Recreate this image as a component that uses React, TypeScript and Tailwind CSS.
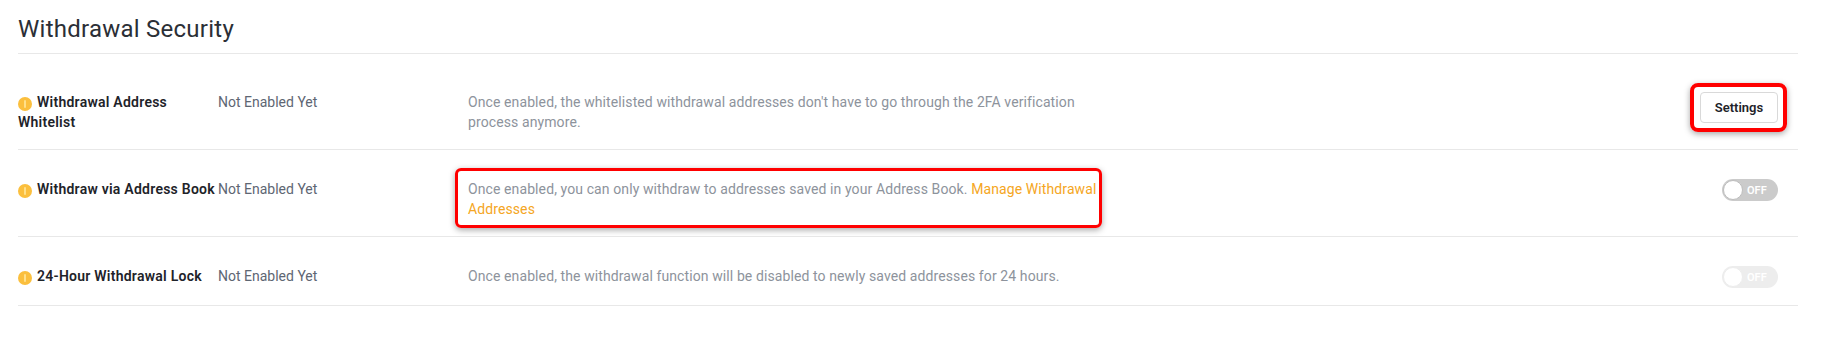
import type { ReactNode } from "react";

type Row = {
  label: string;
  status: string;
  description: ReactNode;
  action: ReactNode;
  highlight?: boolean;
};

function WarnDot() {
  return (
    <span className="mr-[5px] inline-flex h-[14px] w-[14px] items-center justify-center rounded-full bg-[#fbbf3d] align-[-1px]">
      <span className="block h-[8px] w-[2px] rounded-full bg-[#ffe08a]" />
    </span>
  );
}

function Toggle({ disabled }: { disabled?: boolean }) {
  return (
    <div
      className={`flex h-[22px] w-[56px] items-center rounded-full ${
        disabled ? "bg-[#ededed]" : "bg-[#cbcbcb]"
      }`}
    >
      <span
        className={`ml-[1px] h-[20px] w-[20px] rounded-full border bg-white ${
          disabled ? "border-[#ededed]" : "border-[#bdbdbd]"
        }`}
      />
      <span className="ml-[4px] text-[11px] font-semibold leading-none text-white">
        OFF
      </span>
    </div>
  );
}

function SettingsButton() {
  return (
    <div className="relative">
      <button className="h-[31px] w-[78px] rounded-[4px] border border-[#d9d9d9] bg-white text-[13px] font-semibold text-[#1e2329]">
        Settings
      </button>
      <span className="pointer-events-none absolute -top-[9px] -right-[9px] -bottom-[9px] -left-[10px] rounded-[8px] border-[4px] border-[#ff0000] shadow-[0_2px_6px_rgba(0,0,0,0.35)]" />
    </div>
  );
}

const rows: Row[] = [
  {
    label: "Withdrawal Address Whitelist",
    status: "Not Enabled Yet",
    description:
      "Once enabled, the whitelisted withdrawal addresses don't have to go through the 2FA verification process anymore.",
    action: <SettingsButton />,
  },
  {
    label: "Withdraw via Address Book",
    status: "Not Enabled Yet",
    description: (
      <>
        Once enabled, you can only withdraw to addresses saved in your Address
        Book.{" "}
        <a className="text-[#f5a623]">Manage Withdrawal Addresses</a>
      </>
    ),
    action: <Toggle />,
    highlight: true,
  },
  {
    label: "24-Hour Withdrawal Lock",
    status: "Not Enabled Yet",
    description:
      "Once enabled, the withdrawal function will be disabled to newly saved addresses for 24 hours.",
    action: <Toggle disabled />,
  },
];

export default function App() {
  return (
    <div className="min-h-[344px] bg-white font-['Roboto',sans-serif]">
      <div className="ml-[18px] w-[1780px]">
        <h1 className="border-b border-[#e8e8e8] pt-[13px] pb-[8px] text-[24px] leading-[32px] font-normal tracking-[0.25px] text-[#2b2f36]">
          Withdrawal Security
        </h1>

        <div className="mt-[9px]">
          {rows.map((row) => (
            <div
              key={row.label}
              className="flex items-start border-b border-[#e8e8e8] pt-[29px] pr-[20px] pb-[17px] text-[14px] leading-[20px]"
            >
              <div className="w-[200px] shrink-0 font-semibold tracking-[0.25px] text-[#1e2329]">
                <WarnDot />
                {row.label}
              </div>
              <div className="w-[250px] shrink-0 text-[#5e6673]">
                {row.status}
              </div>
              <div className="relative w-[640px] shrink-0 tracking-[0.1px] text-[#8d939c]">
                {row.description}
                {row.highlight && (
                  <span className="pointer-events-none absolute -top-[11px] right-[6px] -bottom-[9px] -left-[13px] rounded-[6px] border-[3px] border-[#ff0000] shadow-[0_2px_6px_rgba(0,0,0,0.35)]" />
                )}
              </div>
              <div className="flex flex-1 justify-end">{row.action}</div>
            </div>
          ))}
        </div>
      </div>
    </div>
  );
}
